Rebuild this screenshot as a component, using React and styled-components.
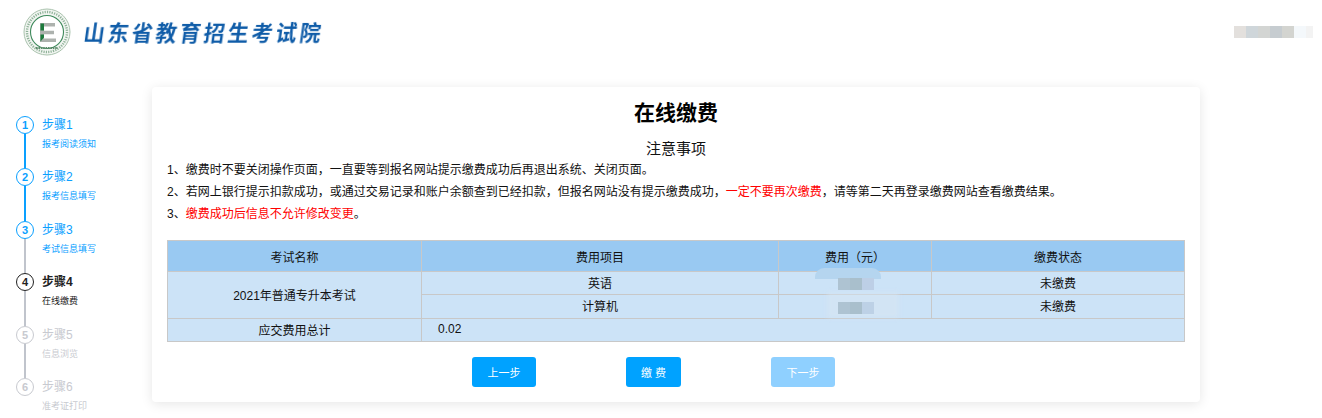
import styled, { createGlobalStyle } from "styled-components";

const STEPS = [
  { no: 1, title: "步骤1", desc: "报考阅读须知", state: "done" },
  { no: 2, title: "步骤2", desc: "报考信息填写", state: "done" },
  { no: 3, title: "步骤3", desc: "考试信息填写", state: "done" },
  { no: 4, title: "步骤4", desc: "在线缴费", state: "current" },
  { no: 5, title: "步骤5", desc: "信息浏览", state: "todo" },
  { no: 6, title: "步骤6", desc: "准考证打印", state: "todo" },
];

const stepColors = { done: "#0aa0ff", current: "#222222", todo: "#c8cad0" };

const USER_BLOCKS = [
  { color: "#e3e0dd", w: 12 },
  { color: "#cfd6da", w: 12 },
  { color: "#d3d5d3", w: 12 },
  { color: "#c6ccd0", w: 12 },
  { color: "#d3d4d0", w: 12 },
  { color: "#f4f8fb", w: 12 },
  { color: "#f3f3f3", w: 7 },
];

function Logo() {
  return (
    <LogoSvg viewBox="0 0 50 50" width="50" height="50">
      <circle cx="25" cy="25" r="23" fill="#f1f5f1" stroke="#a9c2ad" strokeWidth="1" />
      <circle cx="25" cy="25" r="20" fill="none" stroke="#8fb298" strokeWidth="2.4" strokeDasharray="1.2 1.2" />
      <circle cx="25" cy="25" r="16.5" fill="#fff" stroke="#3f8a5c" strokeWidth="1.1" />
      <path d="M18 16h15v3.4H22v4.4h10v3.4H22v4.4h12v3.4H18z" fill="#adb2ae" />
      <path d="M18.5 16.5h3.5v7h-3.5zM18.5 27.5h3.5v3l-3.5 4z" fill="#1c7a3c" />
      <path d="M14 41h22" stroke="#5c8a6a" strokeWidth="2.2" strokeDasharray="1.6 .8" />
    </LogoSvg>
  );
}

export default function App() {
  return (
    <>
      <GlobalStyle />
      <Header>
        <Brand>
          <Logo />
          <BrandName>山东省教育招生考试院</BrandName>
        </Brand>
        <UserMask>
          {USER_BLOCKS.map((b) => (
            <MaskBlock key={b.color} $color={b.color} $w={b.w} />
          ))}
        </UserMask>
      </Header>
      <Main>
        <Sidebar>
          {STEPS.map((step, i) => (
            <Step key={step.no}>
              <Track>
                <Circle $state={step.state}>{step.no}</Circle>
                {i < STEPS.length - 1 && <Line $done={i < 2} />}
              </Track>
              <StepText $state={step.state}>
                <StepTitle $bold={step.state === "current"}>{step.title}</StepTitle>
                <StepDesc>{step.desc}</StepDesc>
              </StepText>
            </Step>
          ))}
        </Sidebar>
        <Card>
          <Title>在线缴费</Title>
          <Subtitle>注意事项</Subtitle>
          <Notes>
            <li>1、缴费时不要关闭操作页面，一直要等到报名网站提示缴费成功后再退出系统、关闭页面。</li>
            <li>
              2、若网上银行提示扣款成功，或通过交易记录和账户余额查到已经扣款，但报名网站没有提示缴费成功，
              <Red>一定不要再次缴费</Red>，请等第二天再登录缴费网站查看缴费结果。
            </li>
            <li>
              3、<Red>缴费成功后信息不允许修改变更</Red>。
            </li>
          </Notes>
          <TableWrap>
            <FeeTable>
              <colgroup>
                <col width="254" />
                <col width="357" />
                <col width="153" />
                <col width="253" />
              </colgroup>
              <thead>
                <tr>
                  <Th>考试名称</Th>
                  <Th>费用项目</Th>
                  <Th>费用（元）</Th>
                  <Th>缴费状态</Th>
                </tr>
              </thead>
              <tbody>
                <Row $h={23}>
                  <Td rowSpan={2}>2021年普通专升本考试</Td>
                  <Td>英语</Td>
                  <Td />
                  <Td>未缴费</Td>
                </Row>
                <Row $h={24}>
                  <Td>计算机</Td>
                  <Td />
                  <Td>未缴费</Td>
                </Row>
                <Row $h={23}>
                  <Td>应交费用总计</Td>
                  <TotalTd colSpan={3}>0.02</TotalTd>
                </Row>
              </tbody>
            </FeeTable>
            <Smear />
            <SmearLow />
            <FeeMask $top={38}>
              <FeeBlock $color="#aec3d2" />
              <FeeBlock $color="#a9bfcc" />
              <FeeBlock $color="#bdcfe6" />
            </FeeMask>
            <FeeMask $top={62}>
              <FeeBlock $color="#aec3d2" />
              <FeeBlock $color="#a9bfcc" />
              <FeeBlock $color="#bdd1e6" />
            </FeeMask>
          </TableWrap>
          <Actions>
            <ActionButton $w={64}>上一步</ActionButton>
            <ActionButton $w={55}>缴 费</ActionButton>
            <ActionButton $w={64} $off>下一步</ActionButton>
          </Actions>
        </Card>
      </Main>
    </>
  );
}

const GlobalStyle = createGlobalStyle`
  html, body {
    margin: 0;
    height: 418px;
    overflow: hidden;
    background: #fff;
    color: #111;
    font-family: "Liberation Sans", "Noto Sans CJK SC", sans-serif;
  }
  * { box-sizing: border-box; }
`;

const Header = styled.header`
  height: 87px;
  display: flex;
  justify-content: space-between;
  align-items: flex-start;
  padding: 7px 9px 0 22px;
`;

const Brand = styled.div`
  display: flex;
  align-items: center;
  gap: 12px;
  height: 50px;
`;

const LogoSvg = styled.svg`
  filter: blur(0.5px);
`;

const BrandName = styled.div`
  font-family: "Noto Sans CJK SC", sans-serif;
  font-size: 21px;
  font-weight: 700;
  letter-spacing: 3px;
  color: #0f5ca8;
  transform: skewX(-8deg);
  filter: blur(0.4px);
`;

const UserMask = styled.div`
  display: flex;
  margin-top: 19px;
`;

const MaskBlock = styled.span`
  width: ${(p) => p.$w}px;
  height: 12px;
  background: ${(p) => p.$color};
`;

const Main = styled.main`
  display: flex;
  align-items: flex-start;
`;

const Sidebar = styled.aside`
  width: 152px;
  padding: 29px 0 0 16px;
`;

const Step = styled.div`
  display: flex;
  height: 52.4px;
  gap: 8px;
`;

const Track = styled.div`
  width: 18px;
  display: flex;
  flex-direction: column;
  align-items: center;
`;

const Circle = styled.div`
  flex: none;
  width: 18px;
  height: 18px;
  border-radius: 50%;
  border: 1px solid ${(p) => stepColors[p.$state]};
  color: ${(p) => stepColors[p.$state]};
  display: flex;
  align-items: center;
  justify-content: center;
  font-size: 11px;
  font-weight: 700;
`;

const Line = styled.div`
  flex: 1;
  width: 2px;
  background: ${(p) => (p.$done ? "#0aa0ff" : "#c0c4cc")};
`;

const StepText = styled.div`
  color: ${(p) => stepColors[p.$state]};
`;

const StepTitle = styled.div`
  font-size: 12px;
  line-height: 18px;
  font-weight: ${(p) => (p.$bold ? 700 : 400)};
`;

const StepDesc = styled.div`
  font-size: 9px;
  line-height: 12px;
  margin-top: 4px;
`;

const Card = styled.section`
  width: 1048px;
  padding: 14px 15px 15px;
  background: #fff;
  border-radius: 4px;
  box-shadow: 0 2px 12px 0 rgba(0, 0, 0, 0.1);
`;

const Title = styled.h1`
  margin: 0 0 14px;
  font-size: 21px;
  line-height: 24px;
  font-weight: 700;
  text-align: center;
  color: #000;
`;

const Subtitle = styled.h2`
  margin: 0;
  font-size: 15px;
  line-height: 20px;
  font-weight: 400;
  text-align: center;
  color: #111;
`;

const Notes = styled.ul`
  margin: 0;
  padding: 0;
  list-style: none;
  font-size: 12px;
  line-height: 22px;
  color: #111;
`;

const Red = styled.span`
  color: #ff0000;
`;

const TableWrap = styled.div`
  position: relative;
  margin-top: 15px;
`;

const FeeTable = styled.table`
  width: 1017px;
  border-collapse: collapse;
  table-layout: fixed;
  font-size: 12px;
  color: #111;
`;

const Th = styled.th`
  height: 31px;
  padding: 0;
  font-weight: 400;
  text-align: center;
  background: #99c9f2;
  border: 1px solid #c8c8c8;
`;

const Row = styled.tr`
  height: ${(p) => p.$h}px;
`;

const Td = styled.td`
  padding: 0 0 2px;
  text-align: center;
  background: #cce3f7;
  border: 1px solid #c8c8c8;
`;

const TotalTd = styled(Td)`
  text-align: left;
  padding-left: 16px;
`;

const Smear = styled.div`
  position: absolute;
  left: 648px;
  top: 28px;
  width: 66px;
  height: 11px;
  border-radius: 9px 9px 0 0;
  background: #b5d5ef;
`;

const SmearLow = styled.div`
  position: absolute;
  left: 660px;
  top: 52px;
  width: 72px;
  height: 26px;
  background: rgba(215, 230, 243, 0.55);
  filter: blur(2px);
`;

const FeeMask = styled.div`
  position: absolute;
  left: 671px;
  top: ${(p) => p.$top}px;
  display: flex;
`;

const FeeBlock = styled.span`
  width: 12px;
  height: 12px;
  background: ${(p) => p.$color};
`;

const Actions = styled.div`
  display: flex;
  gap: 90px;
  margin-top: 15px;
  padding-left: 305px;
`;

const ActionButton = styled.button`
  width: ${(p) => p.$w}px;
  height: 30px;
  padding: 0;
  border: none;
  border-radius: 3px;
  font-family: inherit;
  font-size: 11px;
  color: #fff;
  background: ${(p) => (p.$off ? "#8fd0ff" : "#00a2ff")};
`;
